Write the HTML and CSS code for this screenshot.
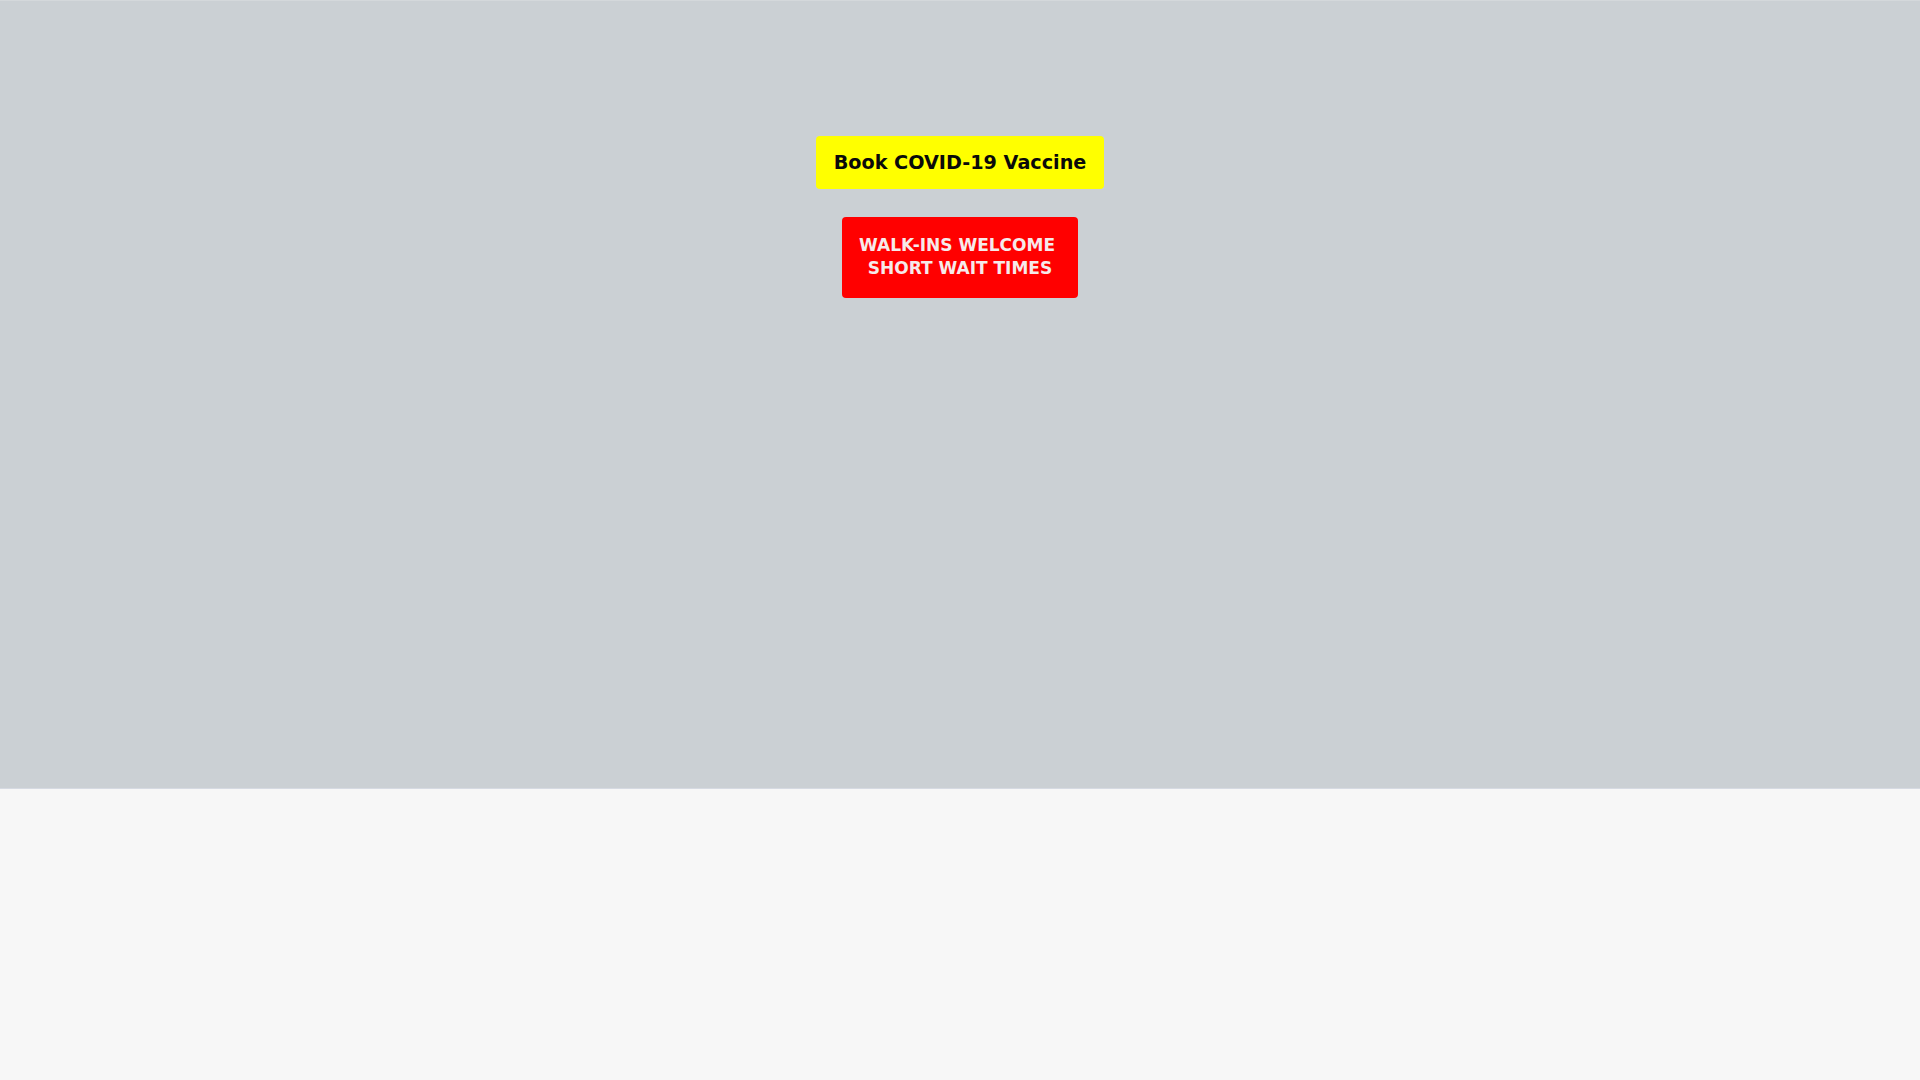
FILE: index.html
```html
<!DOCTYPE html>
<html lang="en">
<head>
<meta charset="utf-8">
<title>Book COVID-19 Vaccine</title>
<link rel="stylesheet" href="styles.css">
</head>
<body>
<section class="hero">
  <a class="btn-book" href="#">Book COVID-19 Vaccine</a>
  <div class="walkins">WALK-INS WELCOME&nbsp;<br>SHORT WAIT TIMES</div>
</section>
<main class="content"></main>
</body>
</html>
```
FILE: styles.css
```css
html, body {
  margin: 0;
  padding: 0;
}
body {
  background: #f7f7f7;
  font-family: "DejaVu Sans", "Liberation Sans", sans-serif;
}
.hero {
  height: 789px;
  box-sizing: border-box;
  background: #cbd0d4;
  border-top: 1px solid #d4d8db;
  border-bottom: 1px solid #d6dae2;
  display: flex;
  flex-direction: column;
  align-items: center;
  padding-top: 135px;
  gap: 28px;
}
.btn-book {
  display: block;
  width: 288px;
  height: 53px;
  box-sizing: border-box;
  background: #ffff00;
  color: #0a0a0a;
  border-radius: 4px;
  font-weight: bold;
  font-size: 19.2px;
  line-height: 53px;
  text-align: center;
  text-decoration: none;
}
.walkins {
  width: 236px;
  height: 81px;
  box-sizing: border-box;
  background: #ff0000;
  border-radius: 4px;
  color: #f6eaea;
  font-weight: bold;
  font-size: 17px;
  line-height: 23px;
  text-align: center;
  padding-top: 17px;
}
.content {
  height: 291px;
}
```
